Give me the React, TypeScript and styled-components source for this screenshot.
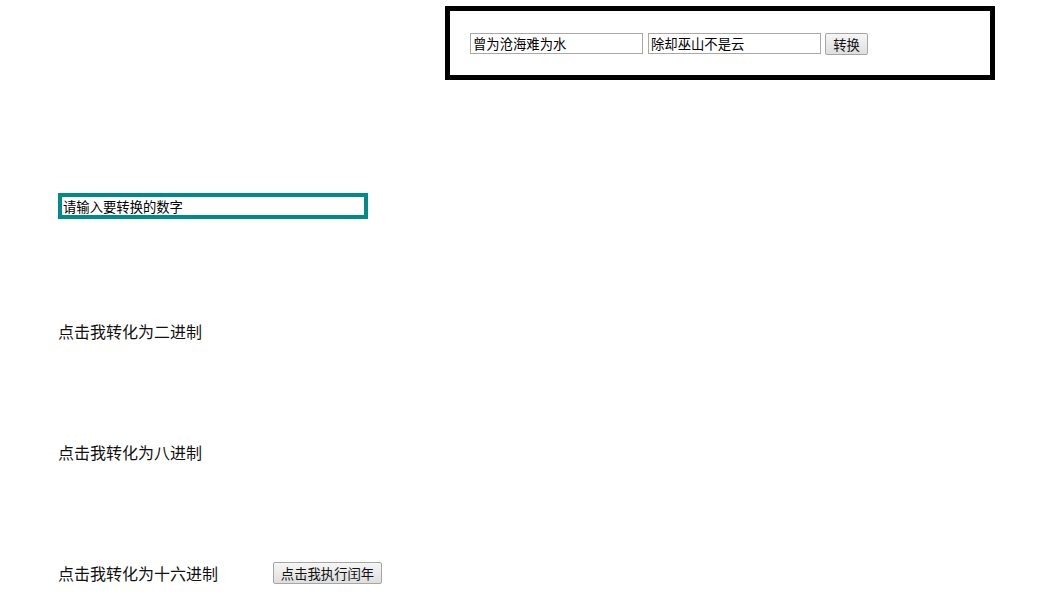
import styled, { createGlobalStyle } from 'styled-components'

const GlobalStyle = createGlobalStyle`
  html, body {
    margin: 0;
    padding: 0;
    background: #fff;
  }
  body {
    font-family: "Liberation Sans", "Noto Sans CJK SC", sans-serif;
    color: #111;
  }
`

const Page = styled.div`
  display: flex;
  flex-direction: column;
  align-items: flex-start;
  padding: 6px 0 0 58px;
  width: 1040px;
  box-sizing: border-box;
`

const ConvertBox = styled.div`
  box-sizing: border-box;
  width: 550px;
  height: 74px;
  margin-left: 387px;
  border: 5px solid #000;
  padding: 22px 20px 0;
  display: flex;
  align-items: flex-start;
  gap: 5px;
`

const TextField = styled.input`
  box-sizing: border-box;
  width: 173px;
  height: 21px;
  margin: 0;
  padding: 0 2px;
  border: 1px solid #a9a9a9;
  font: 13.33px "Liberation Sans", "Noto Sans CJK SC", sans-serif;
  color: #000;
  outline: none;
`

const OldButton = styled.button<{ $width: number; $pull?: number }>`
  box-sizing: border-box;
  width: ${({ $width }) => $width}px;
  height: 22px;
  margin-left: ${({ $pull = 0 }) => -$pull}px;
  padding: 0;
  border: 1px solid #a6a6a6;
  border-radius: 2px;
  background: linear-gradient(#f6f6f6, #dedede);
  font: 13.33px "Liberation Sans", "Noto Sans CJK SC", sans-serif;
  color: #111;
  cursor: pointer;
`

const NumberField = styled.input`
  box-sizing: border-box;
  width: 310px;
  height: 26px;
  margin-top: 113px;
  padding: 0 1px;
  border: 4px solid #008b8b;
  font: 13.33px "Liberation Sans", "Noto Sans CJK SC", sans-serif;
  color: #000;
  outline: none;
`

const Actions = styled.div`
  display: flex;
  flex-direction: column;
  gap: 97px;
  margin-top: 100px;
`

const ActionRow = styled.div`
  display: flex;
  align-items: center;
  height: 24px;
  gap: 55px;
`

const ActionLabel = styled.span`
  font: 16px "Noto Sans CJK SC", sans-serif;
  color: #111;
  cursor: pointer;
`

export default function App() {
  return (
    <>
      <GlobalStyle />
      <Page>
        <ConvertBox>
          <TextField defaultValue="曾为沧海难为水" />
          <TextField defaultValue="除却巫山不是云" />
          <OldButton $width={43} $pull={1}>转换</OldButton>
        </ConvertBox>
        <NumberField defaultValue="请输入要转换的数字" />
        <Actions>
          <ActionRow>
            <ActionLabel>点击我转化为二进制</ActionLabel>
          </ActionRow>
          <ActionRow>
            <ActionLabel>点击我转化为八进制</ActionLabel>
          </ActionRow>
          <ActionRow>
            <ActionLabel>点击我转化为十六进制</ActionLabel>
            <OldButton $width={109}>点击我执行闰年</OldButton>
          </ActionRow>
        </Actions>
      </Page>
    </>
  )
}
